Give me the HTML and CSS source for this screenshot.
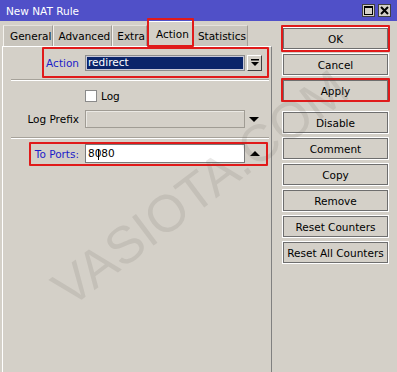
FILE: index.html
```html
<!DOCTYPE html>
<html lang="en">

<head>
    <meta charset="UTF-8">
    <title>New NAT Rule</title>
    <link rel="stylesheet" href="styles.css">
</head>

<body>
    <div class="window">
        <div class="titlebar">
            <span class="title">New NAT Rule</span>
            <div class="title-buttons">
                <span class="tb-btn">
                    <svg width="9" height="9" viewBox="0 0 9 9">
                        <rect x="0.5" y="0.5" width="8" height="8" fill="none" stroke="#000" stroke-width="1"/>
                        <rect x="0" y="0" width="9" height="2" fill="#000"/>
                    </svg>
                </span>
                <span class="tb-btn">
                    <svg width="9" height="9" viewBox="0 0 9 9">
                        <path d="M1 1 L8 8 M8 1 L1 8" stroke="#000" stroke-width="2" fill="none"/>
                    </svg>
                </span>
            </div>
        </div>

        <div class="body">
            <div class="left">
                <div class="tabs">
                    <div class="tab tab-first">General</div>
                    <div class="tab">Advanced</div>
                    <div class="tab">Extra</div>
                    <div class="tab active marked">Action</div>
                    <div class="tab">Statistics</div>
                </div>

                <div class="panel">
                    <div class="row row-action marked">
                        <span class="label blue">Action</span>
                        <div class="select">redirect</div>
                        <span class="drop-btn">
                            <svg width="8" height="8" viewBox="0 0 8 8">
                                <rect x="0" y="0" width="8" height="1.5" fill="#000"/>
                                <path d="M0 3 L8 3 L4 7 Z" fill="#000"/>
                            </svg>
                        </span>
                    </div>

                    <div class="sep"></div>

                    <div class="row row-log">
                        <span class="label"></span>
                        <span class="checkbox"></span>
                        <span class="check-text">Log</span>
                    </div>

                    <div class="row row-prefix">
                        <span class="label">Log Prefix</span>
                        <div class="input input-disabled"></div>
                        <span class="arrow arrow-down"></span>
                    </div>

                    <div class="sep sep-second"></div>

                    <div class="row row-ports marked">
                        <span class="label blue">To Ports:</span>
                        <div class="input">8<span class="caret"></span>080</div>
                        <span class="arrow arrow-up"></span>
                    </div>
                </div>
            </div>

            <div class="buttons">
                <button class="btn marked mark-ok">OK</button>
                <button class="btn">Cancel</button>
                <button class="btn marked mark-apply">Apply</button>
                <button class="btn btn-group">Disable</button>
                <button class="btn">Comment</button>
                <button class="btn">Copy</button>
                <button class="btn">Remove</button>
                <button class="btn">Reset Counters</button>
                <button class="btn">Reset All Counters</button>
            </div>
        </div>

        <div class="watermark">VASIOTA.COM</div>
    </div>
</body>

</html>
```

FILE: styles.css
```css
* {
    box-sizing: border-box;
}

body {
    margin: 0;
    padding: 0;
    background-color: #d4d0c8;
    font-family: "DejaVu Sans", sans-serif;
    font-size: 10.5px;
    color: #000;
}

.window {
    position: relative;
    width: 397px;
    height: 372px;
    background-color: #d4d0c8;
    display: flex;
    flex-direction: column;
    overflow: hidden;
}

/* title bar */

.titlebar {
    height: 21px;
    background-color: #5050c8;
    display: flex;
    align-items: center;
    justify-content: space-between;
    padding: 0 6px 0 6px;
}

.title {
    color: #fff;
    font-size: 10.5px;
}

.title-buttons {
    display: flex;
    gap: 3px;
}

.tb-btn {
    width: 13px;
    height: 13px;
    background-color: #d4d0c8;
    border: 1px solid #404040;
    display: flex;
    align-items: center;
    justify-content: center;
}

/* main area */

.body {
    flex: 1;
    display: flex;
}

.left {
    width: 270px;
    margin-left: 2px;
    display: flex;
    flex-direction: column;
}

.tabs {
    height: 25px;
    display: flex;
    align-items: flex-end;
    padding-left: 1px;
    position: relative;
    z-index: 1;
}

.tab {
    height: 21px;
    line-height: 20px;
    padding: 0 1px 0 4px;
    background-color: #c9c5bd;
    border-top: 1px solid #e4e1db;
    border-left: 1px solid #f4f2ee;
    border-right: 1px solid #a29e96;
    white-space: nowrap;
}

.tab-first {
    padding-left: 6px;
}

.tab.active {
    height: 26px;
    line-height: 24px;
    margin-bottom: -1px;
    margin-left: 1px;
    padding: 0 3px 0 7px;
    background-color: #d4d0c8;
    border-top: 1px solid #fff;
    border-left: 1px solid #fff;
    border-right: 1px solid #808080;
}

.panel {
    flex: 1;
    border-top: 1px solid #fff;
    border-left: 1px solid #fff;
    border-right: 1px solid #808080;
}

/* red annotation boxes */

.marked {
    position: relative;
}

.marked::after {
    content: "";
    position: absolute;
    border: 2px solid #e01a1a;
    border-radius: 1px;
    pointer-events: none;
}

.tab.marked::after {
    top: -4px;
    bottom: 0;
    left: -2px;
    right: -2px;
}

/* form rows */

.row {
    display: flex;
    align-items: center;
}

.label {
    width: 76px;
    margin-right: 6px;
    text-align: right;
    white-space: nowrap;
}

.blue {
    color: #1c1cc8;
}

.row-action {
    margin-top: 8px;
    height: 16px;
}

.row-action.marked::after {
    top: -8px;
    bottom: -7px;
    left: 39px;
    right: 2px;
}

.select {
    width: 160px;
    height: 16px;
    line-height: 13px;
    padding-left: 2px;
    background-color: #0a246a;
    color: #fff;
    border: 1px solid #8c8c8c;
    box-shadow: inset 0 0 0 1px #c8c8d8;
}

.drop-btn {
    width: 15px;
    height: 16px;
    margin-left: 2px;
    border-top: 1px solid #fff;
    border-left: 1px solid #fff;
    border-right: 1px solid #404040;
    border-bottom: 1px solid #404040;
    display: flex;
    align-items: center;
    justify-content: center;
}

.sep {
    margin: 8px 2px 0 8px;
    height: 2px;
    border-top: 1px solid #a6a29a;
    border-bottom: 1px solid #fff;
}

.sep-second {
    margin-top: 9px;
}

.row-log {
    margin-top: 9px;
    height: 12px;
}

.checkbox {
    width: 12px;
    height: 12px;
    background-color: #fff;
    border: 1px solid #8a8a8a;
}

.check-text {
    margin-left: 4px;
}

.row-prefix {
    margin-top: 8px;
    height: 18px;
}

.input {
    width: 160px;
    height: 18px;
    line-height: 16px;
    padding-left: 2px;
    background-color: #fff;
    border: 1px solid #7a7a7a;
    white-space: nowrap;
}

.input-disabled {
    background-color: #d4d0c8;
    border: 1px solid #a09c94;
    box-shadow: inset 1px 1px 0 #ebe9e4;
}

.arrow {
    width: 0;
    height: 0;
    margin-left: 4px;
    border-left: 5px solid transparent;
    border-right: 5px solid transparent;
}

.arrow-down {
    border-top: 5px solid #000;
}

.arrow-up {
    margin-left: 5px;
    border-bottom: 5px solid #000;
}

.row-ports {
    margin-top: 5px;
    height: 19px;
}

.row-ports .input {
    height: 19px;
    line-height: 17px;
}

.row-ports.marked::after {
    top: -2px;
    bottom: -3px;
    left: 26px;
    right: 3px;
}

.caret {
    display: inline-block;
    width: 1px;
    height: 11px;
    background-color: #000;
    vertical-align: middle;
    margin: 0 -4px 0 3px;
}

/* action buttons */

.buttons {
    width: 107px;
    margin: 6px 0 0 10px;
    display: flex;
    flex-direction: column;
    gap: 3px;
}

.btn {
    height: 23px;
    padding: 0;
    font-family: "DejaVu Sans", sans-serif;
    font-size: 10.5px;
    color: #000;
    background-color: #d4d0c8;
    border: 1px solid #fff;
    box-shadow: inset 0 0 0 1px #6e6e6e;
    white-space: nowrap;
}

.btn-group {
    margin-top: 6px;
}

.btn.marked::after {
    left: -2px;
    right: -2px;
}

.mark-ok::after {
    top: -3px;
    bottom: -3px;
}

.mark-apply::after {
    top: -2px;
    bottom: -1px;
}

/* watermark */

.watermark {
    position: absolute;
    left: 200px;
    top: 188px;
    transform: translate(-50%, -50%) rotate(-37deg);
    font-family: "Liberation Sans", sans-serif;
    font-size: 52px;
    color: rgba(90, 84, 76, 0.13);
    white-space: nowrap;
    pointer-events: none;
}
```
